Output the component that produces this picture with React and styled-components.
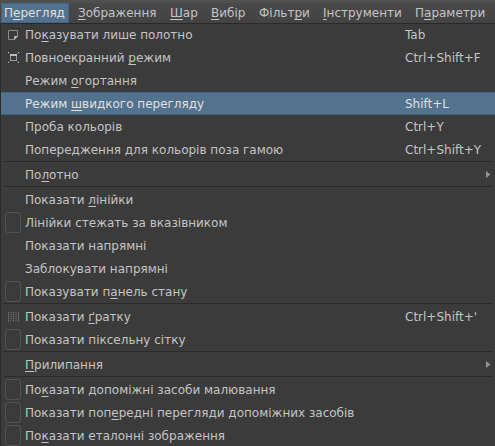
import React from 'react';
import styled, { createGlobalStyle } from 'styled-components';

const GlobalStyle = createGlobalStyle`
  * { box-sizing: border-box; }
  body { margin: 0; background: #3b3b3b; overflow: hidden; }
`;
const Window = styled.div`
  width: 495px; height: 446px; overflow: hidden; background: #3b3b3b; color: #c4c4c4;
  font: 12px/14px "DejaVu Sans", sans-serif; white-space: nowrap;
`;
const MenuBar = styled.nav`
  display: flex; height: 24px; padding-left: 1px; border-top: 3px solid #505050;
  background: linear-gradient(#494949, #434343); border-bottom: 1px solid #292929;
`;
const MenuTitle = styled.div`
  height: 20px; width: ${p => p.$w}px; padding: 3px 0 0 ${p => p.$pad ?? 8}px; flex: none;
  background: ${p => p.$active ? '#53728e' : 'transparent'};
  color: ${p => p.$active ? '#e0e0e0' : 'inherit'};
  box-shadow: ${p => p.$active ? 'inset 0 0 0 1px #426486' : 'none'};
`;
const Mnemonic = styled.u`
  text-decoration-thickness: 1px; text-underline-offset: 2px; text-decoration-skip-ink: none;
`;
const Menu = styled.div` border-left: 1px solid #2b2b2b; margin-top: -1px; `;
const Row = styled.div`
  display: grid; grid-template-columns: 24px 380px 80px 1fr; height: 23px; align-items: center;
  background: ${p => p.$active ? '#53728e' : 'transparent'};
  color: ${p => p.$active ? '#e0e0e0' : 'inherit'};
  box-shadow: ${p => p.$active ? 'inset 0 1px #426486, inset 0 -1px #426486' : 'none'};
`;
const Gutter = styled.span` display: flex; align-items: center; padding-left: 4px; `;
const CheckBox = styled.span`
  width: 16px; height: 21px; border: 1px solid #525252; border-radius: 3px; flex: none;
`;
const Icon = styled.svg` display: block; width: 11px; height: 11px; margin-left: 3px; `;
const Arrow = styled.svg` display: block; width: 5px; height: 7px; margin-left: 1px; `;
const Separator = styled.div` height: 1px; background: #2b2b2b; margin: 0 3px 1px; `;

const Label = ({ text }) => {
  const [a, k, b] = text.split('_');
  return <span>{a}{k && <Mnemonic>{k}</Mnemonic>}{b}</span>;
};
const CanvasIcon = () => (
  <Icon viewBox="0 0 11 11"><path d="M.5 1.5h9v6l-3 3h-6z" fill="none" stroke="#8c8c8c" /><path d="M6 11V7h4z" fill="#b4b4b4" /></Icon>
);
const FullscreenIcon = () => (
  <Icon viewBox="0 0 11 11" shapeRendering="crispEdges">
    <path d="M0 0h1v1H0zM10 0h1v1h-1zM0 10h1v1H0zM10 10h1v1h-1z" fill="#c4c4c4" />
    <path d="M1 1h1v1H1zM9 1h1v1H9zM1 9h1v1H1zM9 9h1v1H9z" fill="#666" />
    <path d="M2.5 2.5h6v6h-6z" fill="none" stroke="#999" /><path d="M2 2h7v2H2z" fill="#bcbcbc" />
  </Icon>
);
const GridIcon = () => (
  <Icon viewBox="0 0 11 11"><path d="M.5 1v10M3 1v10M5.5 1v10M8 1v10M10.5 1v10" fill="none" stroke="#777" strokeWidth=".9" strokeDasharray="1.5 .5" /></Icon>
);
const gutterParts = { canvas: CanvasIcon, fullscreen: FullscreenIcon, grid: GridIcon, check: CheckBox };

const titles = [
  ['П_е_регляд', 68, 3], ['_З_ображення', 93, 9], ['_Ш_ар', 41], ['_В_ибір', 48],
  ['Фільт_р_и', 64], ['_І_нструменти', 92], ['П_а_раметри', 87],
];
const rows = [
  { text: 'По_к_азувати лише полотно', keys: 'Tab', mark: 'canvas' },
  { text: 'Повноекранний _р_ежим', keys: 'Ctrl+Shift+F', mark: 'fullscreen' },
  { text: 'Режим _о_гортання' },
  { text: 'Режим _ш_видкого перегляду', keys: 'Shift+L', active: true },
  { text: 'Проба кольорів', keys: 'Ctrl+Y' },
  { text: 'Попередження для кольорів поза гамою', keys: 'Ctrl+Shift+Y' },
  null,
  { text: 'По_л_отно', submenu: true },
  null,
  { text: 'Показати _л_інійки' },
  { text: 'Лінійки стежать за вказівником', mark: 'check' },
  { text: 'Показати напрямні' },
  { text: 'Заблокувати напрямні' },
  { text: 'Показувати п_а_нель стану', mark: 'check' },
  null,
  { text: 'Показати _ґ_ратку', keys: "Ctrl+Shift+'", mark: 'grid' },
  { text: 'Показати піксельну сітку', mark: 'check' },
  null,
  { text: '_П_рилипання', submenu: true },
  null,
  { text: 'По_к_азати допоміжні засоби малювання', mark: 'check' },
  { text: 'Показати поп_е_редні перегляди допоміжних засобів', mark: 'check' },
  { text: 'По_к_азати еталонні зображення', mark: 'check' },
];

const MenuItem = ({ item }) => {
  const Mark = gutterParts[item.mark];
  return (
    <Row $active={item.active}>
      <Gutter>{Mark && <Mark />}</Gutter>
      <Label text={item.text} />
      <span>{item.keys}</span>
      {item.submenu && <Arrow viewBox="0 0 5 7"><path d="M0 0v7l4.5-3.5z" fill="#929292" /></Arrow>}
    </Row>
  );
};

export default function App() {
  return (
    <Window>
      <GlobalStyle />
      <MenuBar>
        {titles.map(([text, width, pad], i) => (
          <MenuTitle key={text} $w={width} $pad={pad} $active={i === 0}><Label text={text} /></MenuTitle>
        ))}
      </MenuBar>
      <Menu>{rows.map((r, i) => r ? <MenuItem key={i} item={r} /> : <Separator key={i} />)}</Menu>
    </Window>
  );
}
